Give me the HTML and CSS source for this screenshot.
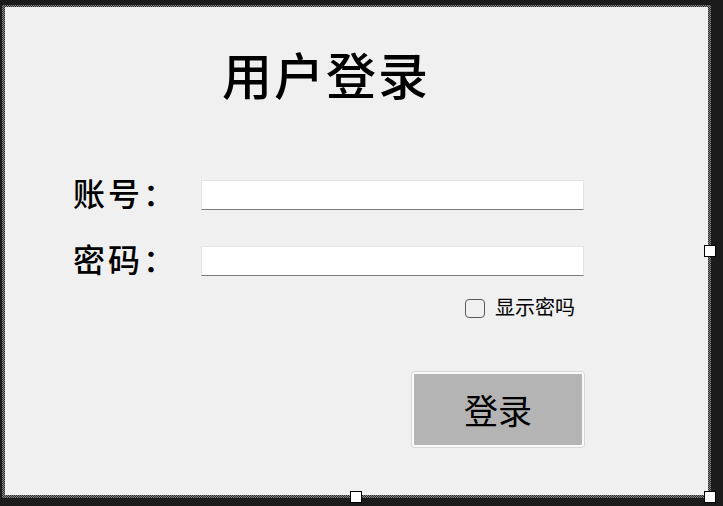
FILE: index.html
```html
<!DOCTYPE html>
<html lang="zh-CN">
<head>
    <meta charset="UTF-8">
    <meta name="viewport" content="width=device-width, initial-scale=1.0">
    <title>用户登录</title>
    <link rel="stylesheet" href="styles.css">
</head>
<body>
    <div class="frame">
        <div class="panel">
            <h1 class="title">用户登录</h1>

            <form class="login" action="">
                <label class="label" for="account">账号：</label>
                <input class="field" type="text" id="account">

                <label class="label" for="password">密码：</label>
                <input class="field" type="password" id="password">

                <div class="show-row">
                    <label class="show">
                        <input type="checkbox" class="checkbox">
                        <span>显示密吗</span>
                    </label>
                </div>

                <div class="submit-row">
                    <button class="submit" type="submit">登录</button>
                </div>
            </form>
        </div>

        <span class="handle handle-right"></span>
        <span class="handle handle-bottom"></span>
        <span class="handle handle-corner"></span>
    </div>
</body>
</html>
```

FILE: styles.css
```css
*{
    margin: 0;
    padding: 0;
    box-sizing: border-box;
}

:root{
    --desk: #1b1b1b;
    --panel: #f0f0f0;
    --text: #000;
    --line: #7a7a7a;
    --button: #b4b4b4;
}

html, body{
    min-height: 100%;
}

body{
    min-height: 100vh;
    background-color: var(--desk);
    font-family: "Liberation Serif", "Noto Sans CJK SC", serif;
    color: var(--text);
    padding: 5px 0 0 2px;
}

.frame{
    position: relative;
    width: 709px;
    height: 493px;
    padding: 2px 3px 3px 3px;
    background-color: #4a4a4a;
    background-image: repeating-conic-gradient(#8a8a8a 0 25%, #2a2a2a 0 50%);
    background-size: 2px 2px;
}

.panel{
    width: 100%;
    height: 100%;
    background-color: var(--panel);
    padding: 46px 0 0 68px;
}

.title{
    margin-left: 149px;
    font-size: 50px;
    line-height: 50px;
    font-weight: 500;
    letter-spacing: 2px;
}

.login{
    margin-top: 77px;
    display: grid;
    grid-template-columns: 128px 383px;
    row-gap: 36px;
    align-items: center;
}

.label{
    font-size: 32px;
    line-height: 30px;
    font-weight: 500;
    letter-spacing: 3px;
    white-space: nowrap;
}

.field{
    height: 30px;
    background-color: #fff;
    border: 1px solid #e4e4e4;
    border-bottom: 1px solid var(--line);
    outline: none;
    font-size: 16px;
    padding: 0 6px;
}

.show-row{
    grid-column: 2;
    margin-top: -14px;
    display: flex;
    justify-content: flex-end;
    padding-right: 9px;
}

.show{
    display: flex;
    align-items: center;
    gap: 10px;
    font-size: 20px;
    line-height: 20px;
}

.checkbox{
    appearance: none;
    width: 20px;
    height: 19px;
    border: 1px solid #5a5a5a;
    border-radius: 4px;
    background-color: var(--panel);
}

.submit-row{
    grid-column: 2;
    margin-top: 18px;
    display: flex;
    justify-content: flex-end;
}

.submit{
    width: 172px;
    height: 75px;
    background-color: var(--button);
    border: 2px solid #fafafa;
    border-radius: 3px;
    box-shadow: 0 0 0 1px #d8d8d8;
    font-family: inherit;
    font-size: 34px;
    color: var(--text);
}

.handle{
    position: absolute;
    width: 12px;
    height: 12px;
    background-color: #fff;
    border: 1px solid #000;
}

.handle-right{
    left: 702px;
    top: 240px;
}

.handle-bottom{
    left: 348px;
    top: 486px;
}

.handle-corner{
    left: 702px;
    top: 486px;
}
```
